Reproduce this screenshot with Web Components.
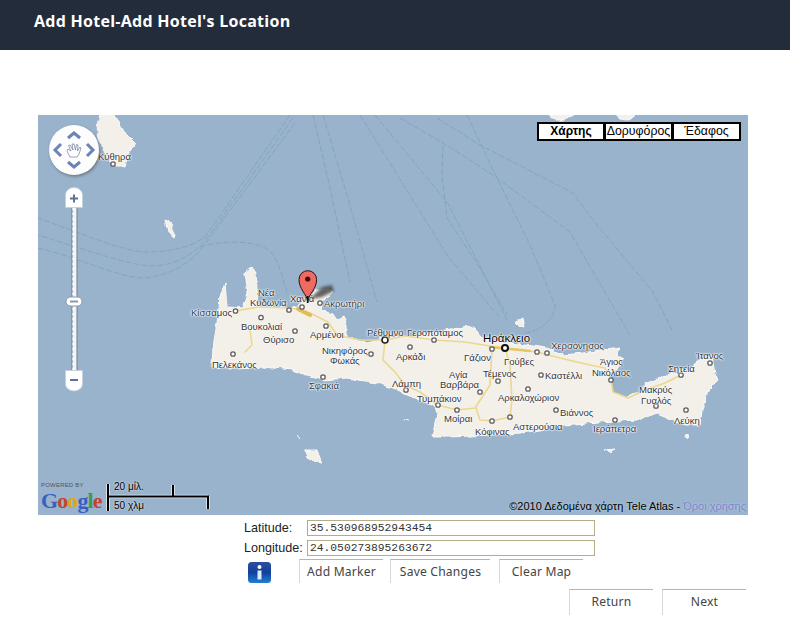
<!DOCTYPE html>
<html>
<head>
<meta charset="utf-8">
<title>Add Hotel's Location</title>
<style>
	html, body { margin: 0; padding: 0; background: #fff; }
	body { width: 790px; height: 622px; overflow: hidden; font-family: "Liberation Sans", Arial, sans-serif; }
</style>
</head>
<body>
<app-header>Add Hotel-Add Hotel's Location</app-header>
<hotel-map></hotel-map>
<location-form latitude="35.530968952943454" longitude="24.050273895263672"></location-form>
<nav-row>
	<tab-button style="width:84px">Return</tab-button>
	<tab-button style="width:84px">Next</tab-button>
</nav-row>

<script>
class AppHeader extends HTMLElement {
	constructor(){
		super();
		this.attachShadow({mode:"open"});
		this.shadowRoot.innerHTML = `
			<style>
				:host {
					display: block;
					height: 50px;
					box-sizing: border-box;
					padding: 10px 0 0 34px;
					background-color: #232c3b;
					color: #fff;
					font: bold 16px/22px "Open Sans", sans-serif;
					letter-spacing: .27px;
				}
			</style>
			<slot></slot>
		`;
	}
}
customElements.define("app-header",AppHeader);

class MapLabel extends HTMLElement {
	constructor(){
		super();
		this.attachShadow({mode:"open"});
		this.shadowRoot.innerHTML = `
			<style>
				:host {
					position: absolute;
					line-height: 11px;
					font-size: 9.5px;
					white-space: nowrap;
					color: #333;
					transform: translateY(-50%);
					text-shadow: 0 0 2px #fff, 0 0 2px #fff, 0 0 2px #fff, 0 0 1px #fff;
				}
				:host([big]) { font-size: 11.5px; color: #000; }
			</style>
			<slot></slot>
		`;
	}
	connectedCallback(){
		this.style.left = (this.getAttribute("x")-38)+"px";
		this.style.top = (this.getAttribute("y")-115)+"px";
	}
}
customElements.define("map-label",MapLabel);

// all map coordinates below are page coordinates, the svg viewBox starts at the map's corner
const LABELS = [
	["Κύθηρα",98,156],["Νέα",258,292],["Κυδωνία",250,302],["Κίσσαμος",191,312],["Χανιά",290,298],
	["Ακρωτήρι",324,303],["Βουκολιαί",241,326],["Θύρισο",263,339],["Αρμένοι",310,334],["Πελεκάνος",212,364],
	["Νικηφόρος",322,350],["Φωκάς",330,360],["Ρέθυμνο",367,332],["Γεροπόταμος",407,332],["Αρκάδι",396,356],
	["Λάμπη",392,383],["Σφακιά",309,385],["Τυμπάκιον",417,398],["Μοίραι",444,418],["Γάζιον",464,357],
	["Γούβες",504,361],["Χερσόνησος",551,345],["Άγιος",600,361],["Νικόλαος",592,372],["Τέμενος",483,373],
	["Καστέλλι",545,375],["Αγία",449,374],["Βαρβάρα",440,384],["Αρκαλοχώριον",498,397],["Βιάννος",560,412],
	["Ιεράπετρα",593,428],["Αστερούσια",513,426],["Κόφινας",475,431],["Μακρύς",639,389],["Γυαλός",641,400],
	["Λεύκη",674,420],["Σητεία",668,368],["Ίτανος",696,355]
];
const DOTS = [
	[113,164],[235.5,311],[289,310],[302,307],[320,303],[261,317.5],[295,331],[326,326],[233,354],[371,354],
	[434,340],[410,347],[406,390],[323,377],[438,405],[457,410],[492,349],[537,352],[547,353],[611,380],
	[498,381],[541,375],[480,392],[528,389],[556,410],[615,420],[510,417],[492,421],[656,406],[686,410],
	[681,375],[710,363]
];
const LANES = [
	"M290 115L205 237C190 248 170 252 143 252C120 250 80 233 38 218",
	"M293 118L213 230C200 250 180 266 150 266C125 264 80 248 38 235",
	"M295 123L217 228C200 252 185 274 143 278C120 278 80 258 38 248",
	"M200 247C220 240 250 241 263 247C275 252 278 262 287 292",
	"M313 115L330 188L350 282","M323 115L347 195L377 302",
	"M360 115L447 255L500 318","M375 115L447 202L483 272L508 322","M400 118L443 143L493 175L570 232L593 272L630 335",
	"M437 118L480 145L573 193L597 225L653 292L673 332","M467 115L497 178L530 245L555 305C555 320 540 332 523 333",
	"M443 145L442 175L447 218L480 268L507 315"
];

class HotelMap extends HTMLElement {
	constructor(){
		super();
		this.attachShadow({mode:"open"});
		let dots = DOTS.map(d=>`<circle cx="${d[0]}" cy="${d[1]}" r="2.2"/>`).join("");
		let lanes = LANES.map(d=>`<path d="${d}"/>`).join("");
		let labels = LABELS.map(l=>`<map-label x="${l[1]}" y="${l[2]}">${l[0]}</map-label>`).join("");
		this.shadowRoot.innerHTML = `
			<style>
				:host {
					display: block;
					position: relative;
					width: 710px;
					height: 400px;
					margin: 65px 0 0 38px;
					overflow: hidden;
					background-color: #99b3cc;
					font-family: "Liberation Sans", Arial, sans-serif;
				}
				svg { position: absolute; left: 0; top: 0; display: block; }
				.types { position: absolute; left: 499px; top: 7px; display: flex; }
				.types span {
					width: 68px;
					height: 19px;
					box-sizing: border-box;
					border: 2px solid #000;
					background: #fff;
					font-size: 12.3px;
					line-height: 15px;
					text-align: center;
					white-space: nowrap;
				}
				.types span + span { border-left-width: 1px; }
				.types b { font-size: 12px; }
				.powered { position: absolute; left: 3px; top: 367px; font-size: 6px; line-height: 7px; color: #555; letter-spacing: .2px; }
				.google { position: absolute; left: 3px; top: 374px; font: bold 22px/23px "Liberation Serif", serif; letter-spacing: -.9px; }
				.scale { position: absolute; left: 76px; font-size: 10px; line-height: 12px; color: #000; text-shadow: 0 0 2px #fff; }
				.copy { position: absolute; right: 2px; top: 385px; font-size: 11px; line-height: 13px; color: #000; white-space: nowrap; text-shadow: 0 0 2px #cfdbe6; }
				.copy span { color: #7a82d0; }
			</style>
			<svg width="710" height="400" viewBox="38 115 710 400" xmlns="http://www.w3.org/2000/svg">
				<defs>
					<filter id="coast" x="-5%" y="-5%" width="110%" height="110%">
						<feTurbulence type="fractalNoise" baseFrequency=".14" numOctaves="2" seed="4"/>
						<feDisplacementMap in="SourceGraphic" scale="5" xChannelSelector="R" yChannelSelector="G"/>
						<feGaussianBlur stdDeviation=".4"/>
					</filter>
				</defs>
				<g fill="none" stroke="#82a0c1" stroke-width=".9" stroke-dasharray="6 2">${lanes}</g>
				<g fill="#f3f0e9" stroke="#fbfaf7" stroke-width="1" stroke-linejoin="round" filter="url(#coast)">
					<path d="M212 367L213 347L218 317L220 297L225 283L227 307L243 308L248 293L245 273L252 267L256 273L258 305L265 307L290 308L297 307L303 300L312 293L327 288L332 292L323 300L321 311L333 314L337 320L343 317L346 323L346 337L367 342L383 338L413 337L450 329L473 327L483 338L510 343L547 348L563 355L583 353L620 347L617 353L623 360L617 368L609 377L612 393L627 398L637 392L647 383L667 375L690 368L703 357L712 358L715 373L718 380L708 390L702 410L700 425L683 425L667 417L657 413L637 420L597 422L563 425L523 433L490 435L450 437L432 437L437 413L435 407L413 397L393 388L377 383L347 378L323 380L303 375L293 370L263 367L233 368Z"/>
					<path d="M100 113L97 127L100 143L107 157L115 167L125 167L128 153L135 143L125 133L113 113Z"/>
					<path d="M165 220L170 222L176 235L175 238L168 232Z"/>
					<path d="M547 113L577 113L565 120L555 120Z"/>
					<path d="M613 113L637 113L628 120L620 119Z"/>
					<path d="M515 322L522 318L524 327L518 325Z"/>
					<path d="M305 450L317 450L322 463L315 462L307 458Z"/>
					<path d="M297 435L300 439" fill="none"/>
					<path d="M402 421L409 419" fill="none"/>
					<path d="M605 450L615 449L611 453Z"/>
					<path d="M685 435L690 436L687 439Z"/>
				</g>
				<g fill="none" stroke-linejoin="round" stroke-linecap="round">
					<g stroke="#ecd78e" stroke-width="1.6">
						<path d="M236 311L258 307L290 308L302 310L310 313L328 322L337 335L360 340L385 340L405 336L434 340L465 342L490 346L505 348L537 352L560 358L590 365L605 368L611 380L613 392L628 398L645 390L665 383L681 375"/>
						<path d="M385 340L383 360L395 372L405 385L420 392L438 405L457 410L475 408L490 385L492 349"/>
						<path d="M476 408L480 420L492 421L510 417L512 400L510 365L505 348"/>
						<path d="M250 330L252 345L245 352"/>
					</g>
					<path d="M298 309L310 315" stroke="#e2bd55" stroke-width="4"/>
					<path d="M490 347L530 351" stroke="#e6c565" stroke-width="2.4"/>
				</g>
				<g fill="#fff" stroke="#5e5e5e" stroke-width="1.3">${dots}
					<circle cx="385" cy="340" r="3" stroke="#222" stroke-width="1.6"/>
					<circle cx="505" cy="348" r="3" stroke="#111" stroke-width="2"/>
				</g>
			</svg>
			${labels}
			<map-label big x="483" y="338">Ηράκλειο</map-label>
			<svg width="710" height="400" viewBox="38 115 710 400" xmlns="http://www.w3.org/2000/svg">
				<defs><filter id="soft" x="-30%" y="-30%" width="160%" height="160%"><feGaussianBlur stdDeviation="1.8"/></filter>
				<filter id="panshadow" x="-20%" y="-20%" width="140%" height="140%"><feGaussianBlur stdDeviation="1.5"/></filter></defs>
				<path d="M310 299L322 287L332 285L334 291L322 297Z" fill="#4a4a4a" opacity=".85" filter="url(#soft)"/>
				<path d="M307.7 301C306.5 294 299 289 299 279.5A8.8 8.8 0 0 1 316.6 279.5C316.6 289 309 294 307.7 301Z" fill="#ee6a62" stroke="#2a1210" stroke-width="1"/>
				<circle cx="307.7" cy="279" r="2.6" fill="#4a0703"/>
				<path d="M306.8 296H308.6V303H306.8Z" fill="#111"/>

				<circle cx="75" cy="151.500" r="25" fill="#444" opacity=".55" filter="url(#panshadow)"/>
				<circle cx="74" cy="150" r="25" fill="#fdfdfe"/>
				<g fill="none" stroke="#6b83b5" stroke-width="3">
					<path d="M68 138L74 133L80 138"/>
					<path d="M68 162L74 167L80 162"/>
					<path d="M61 144L55 150L61 156"/>
					<path d="M87 144L93 150L87 156"/>
				</g>
				<path d="M70 157L67 151L68 149L71 151L68.500 145.500L70 145L73 150L72 144L74 144L75.500 150L76.500 144.500L78 145L77.500 151L80 147L81 148L79 154L77 157Z" fill="#fff" stroke="#6f7d9a" stroke-width=".7" stroke-linejoin="round"/>

				<rect x="72" y="205" width="5" height="168" fill="#eef2f7" stroke="#6f7f92" stroke-width="1"/>
				<path d="M73.500 208V370" stroke="#fff" stroke-width="2" stroke-dasharray="2 3"/>
				<path d="M65.500 207.500V195A8.500 7.500 0 0 1 82.500 195V207.500Z" fill="#fff" stroke="#c4cfdc" stroke-width=".8"/>
				<path d="M70 198.500H78M74 194.500V202.500" stroke="#5f7196" stroke-width="2"/>
				<rect x="66" y="297" width="16" height="9" rx="4.500" fill="#fff" stroke="#8d99ab" stroke-width="1"/>
				<path d="M70 301.500H78" stroke="#8d99ab" stroke-width="2"/>
				<path d="M65.500 370.500V384A8.500 7 0 0 0 82.500 384V370.500Z" fill="#fff" stroke="#c4cfdc" stroke-width=".8"/>
				<path d="M70 380H78" stroke="#5f7196" stroke-width="2"/>

				<g fill="none" stroke="#fff" stroke-width="3.500" opacity=".8"><path d="M108 484V511M108 496.500H208M173 485V496M208 496V509"/></g>
				<g fill="none" stroke="#000" stroke-width="2"><path d="M108 484V511M107 496.500H209M173 485V497M208 496V509"/></g>
			</svg>
			<div class="types"><span><b>Χάρτης</b></span><span>Δορυφόρος</span><span>Έδαφος</span></div>
			<div class="powered">POWERED BY</div>
			<div class="google"><span style="color:#3b5fc0">G</span><span style="color:#c8402f">o</span><span style="color:#d9a923">o</span><span style="color:#3b5fc0">g</span><span style="color:#3d9a48">l</span><span style="color:#c8402f">e</span></div>
			<div class="scale" style="top:366px">20 μίλ.</div>
			<div class="scale" style="top:385px">50 χλμ</div>
			<div class="copy">©2010 Δεδομένα χάρτη Tele Atlas - <span>Όροι χρήσης</span></div>
		`;
	}
}
customElements.define("hotel-map",HotelMap);

class TabButton extends HTMLElement {
	constructor(){
		super();
		this.attachShadow({mode:"open"});
		this.shadowRoot.innerHTML = `
			<style>
				:host {
					display: block;
					box-sizing: border-box;
					height: 24px;
					border-top: 1px solid #b4b4b4;
					border-left: 1px solid #d8d8d8;
					color: #444;
					text-align: center;
					font: 12.1px/24px "Noto Sans", sans-serif;
					letter-spacing: .2px;
					white-space: nowrap;
				}
			</style>
			<slot></slot>
		`;
	}
}
customElements.define("tab-button",TabButton);

class LocationRow extends HTMLElement {
	constructor(){
		super();
		this.attachShadow({mode:"open"});
		this.shadowRoot.innerHTML = `
			<style>
				:host { display: flex; align-items: center; height: 16px; }
				.label { width: 63px; font: 12.6px/16px "Liberation Sans", sans-serif; color: #222; white-space: nowrap; }
				.field {
					width: 288px;
					height: 16px;
					box-sizing: border-box;
					border: 1px solid #b3ad88;
					padding-left: 2px;
					color: #333;
					font: 11.3px/15px "Liberation Mono", monospace;
				}
			</style>
			<span class="label"><slot name="label"></slot></span>
			<span class="field"><slot></slot></span>
		`;
	}
}
customElements.define("location-row",LocationRow);

class LocationForm extends HTMLElement {
	constructor(){
		super();
		this.attachShadow({mode:"open"});
		this.shadowRoot.innerHTML = `
			<style>
				:host { display: block; padding: 5px 0 0 244px; }
				.rows { display: grid; row-gap: 4px; }
				.tabs { display: flex; margin-top: 3px; }
				.info { width: 23px; height: 21px; margin: 3px 28px 0 4px; }
				.tabs tab-button:nth-of-type(1) { width: 84px; margin-right: 7px; }
				.tabs tab-button:nth-of-type(2) { width: 100px; margin-right: 9px; }
				.tabs tab-button:nth-of-type(3) { width: 84px; }
			</style>
			<div class="rows">
				<location-row><span slot="label">Latitude:</span>${this.getAttribute("latitude")}</location-row>
				<location-row><span slot="label">Longitude:</span>${this.getAttribute("longitude")}</location-row>
			</div>
			<div class="tabs">
				<svg class="info" viewBox="0 0 23 21" xmlns="http://www.w3.org/2000/svg">
					<defs><linearGradient id="blue" x1="0" y1="0" x2="0" y2="1"><stop offset="0" stop-color="#2b4f9e"/><stop offset=".5" stop-color="#123f9c"/><stop offset="1" stop-color="#1f7fd6"/></linearGradient></defs>
					<rect width="23" height="21" rx="3.500" fill="url(#blue)"/>
					<circle cx="11.500" cy="5" r="2" fill="#fff"/>
					<rect x="9.500" y="8.500" width="4" height="9" fill="#dfeafa"/>
				</svg>
				<tab-button>Add Marker</tab-button>
				<tab-button>Save Changes</tab-button>
				<tab-button>Clear Map</tab-button>
			</div>
		`;
	}
}
customElements.define("location-form",LocationForm);

class NavRow extends HTMLElement {
	constructor(){
		super();
		this.attachShadow({mode:"open"});
		this.shadowRoot.innerHTML = `
			<style>
				:host { display: flex; justify-content: flex-end; gap: 9px; padding: 6px 44px 0 0; }
				::slotted(tab-button) { height: 26px; line-height: 24px; }
			</style>
			<slot></slot>
		`;
	}
}
customElements.define("nav-row",NavRow);
</script>
</body>
</html>
